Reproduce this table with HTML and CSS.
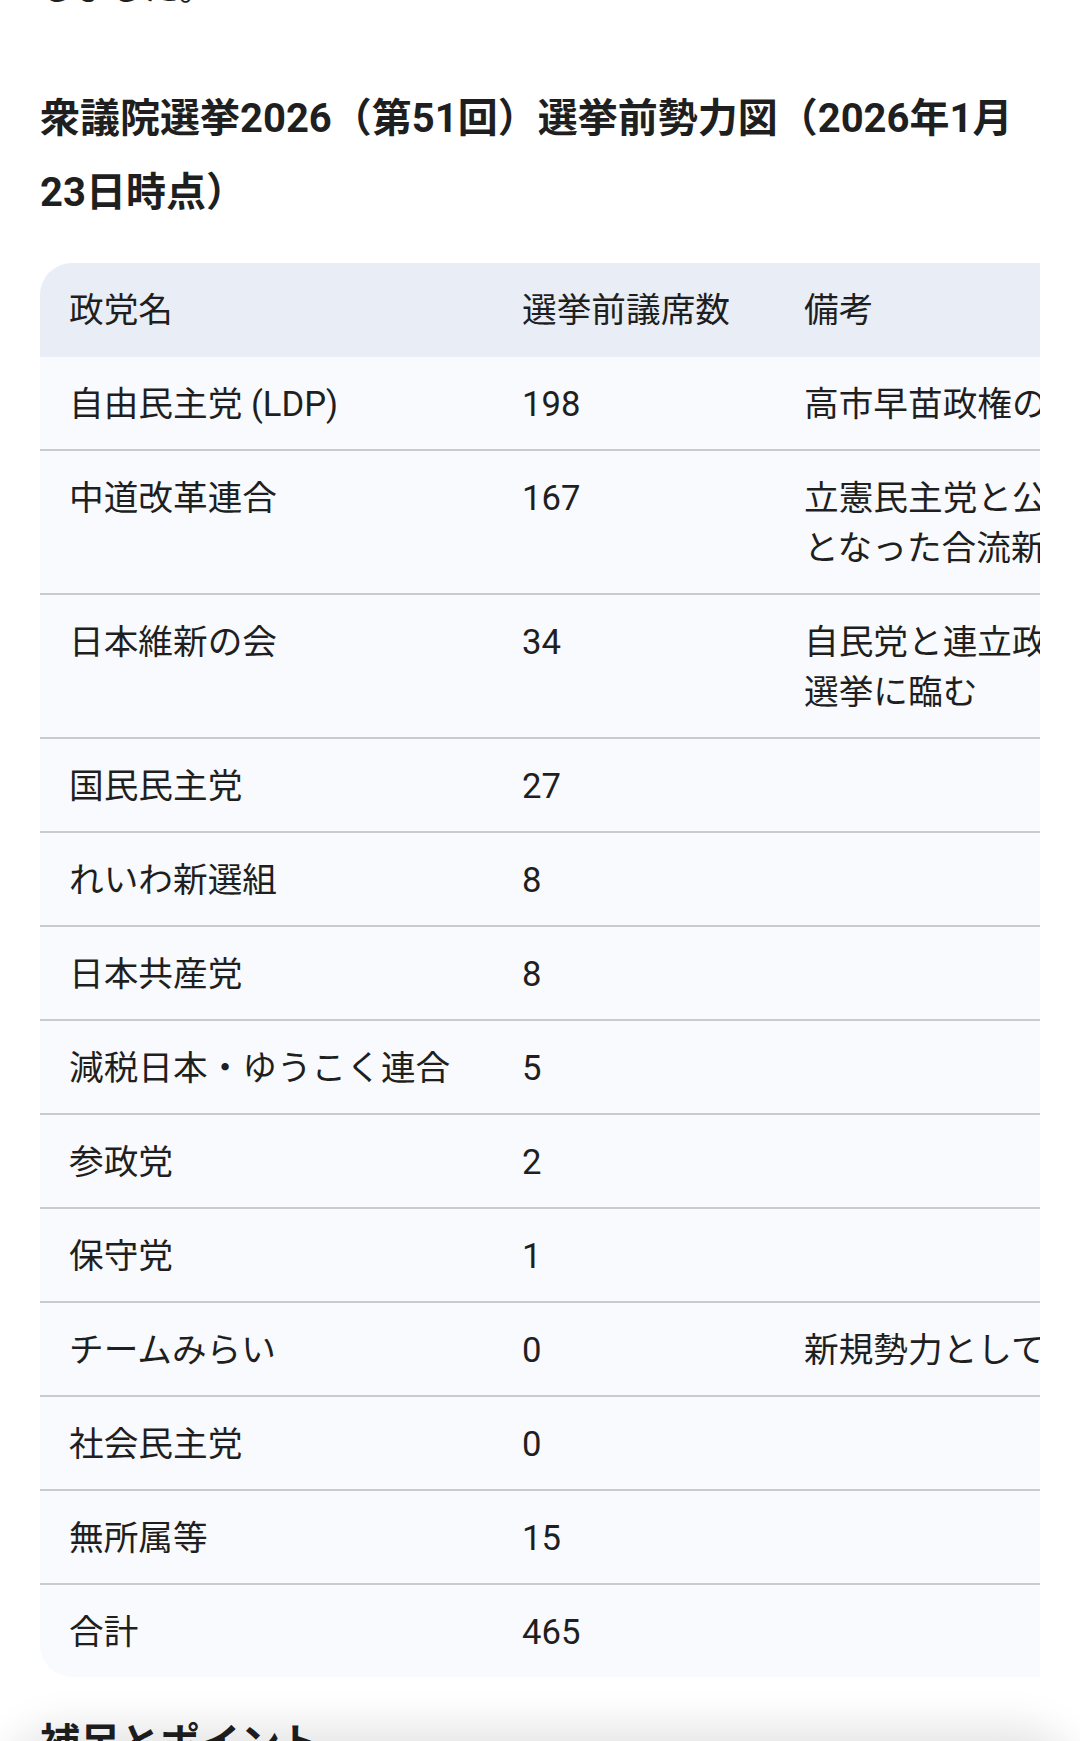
FILE: index.html
```html
<!DOCTYPE html>
<html lang="ja">
<head>
<meta charset="utf-8">
<title>衆議院選挙2026 選挙前勢力図</title>
<link rel="stylesheet" href="styles.css">
</head>
<body>
<main class="page">
  <p class="lead">公示前の各党の議席数と主な動向を、以下の表にまとめて整理しました。</p>
  <h2 class="title">衆議院選挙2026（第51回）選挙前勢力図（2026年1月23日時点）</h2>
  <div class="table-wrap">
    <table class="seats">
      <thead>
        <tr>
          <th class="col-party">政党名</th>
          <th class="col-seats">選挙前議席数</th>
          <th class="col-note">備考</th>
        </tr>
      </thead>
      <tbody>
        <tr><td>自由民主党 (LDP)</td><td>198</td><td>高市早苗政権の与党</td></tr>
        <tr><td>中道改革連合</td><td>167</td><td>立憲民主党と公明党が母体となった合流新党</td></tr>
        <tr><td>日本維新の会</td><td>34</td><td>自民党と連立政権を組んで選挙に臨む</td></tr>
        <tr><td>国民民主党</td><td>27</td><td></td></tr>
        <tr><td>れいわ新選組</td><td>8</td><td></td></tr>
        <tr><td>日本共産党</td><td>8</td><td></td></tr>
        <tr><td>減税日本・ゆうこく連合</td><td>5</td><td></td></tr>
        <tr><td>参政党</td><td>2</td><td></td></tr>
        <tr><td>保守党</td><td>1</td><td></td></tr>
        <tr><td>チームみらい</td><td>0</td><td>新規勢力として挑戦</td></tr>
        <tr><td>社会民主党</td><td>0</td><td></td></tr>
        <tr><td>無所属等</td><td>15</td><td></td></tr>
        <tr><td>合計</td><td>465</td><td></td></tr>
      </tbody>
    </table>
  </div>
  <h3 class="subtitle">補足とポイント</h3>
  <p class="body-text">今回の選挙では、与党の過半数維持が最大の焦点となります。</p>
</main>
<div class="composer-shadow" aria-hidden="true"></div>
</body>
</html>
```
FILE: styles.css
```css
* {
  box-sizing: border-box;
}

html,
body {
  margin: 0;
  background: #ffffff;
}

body {
  font-family: Roboto, "Noto Sans CJK JP", sans-serif;
  color: #1f1f1f;
  font-size: 34.67px;
  line-height: 50px;
  overflow: hidden;
}

.page {
  display: flow-root;
  padding: 0 40px;
}

.lead {
  margin: -87px 0 0;
}

.title {
  margin: 69px 0 0;
  font-size: 40px;
  line-height: 74px;
  font-weight: 700;
}

.table-wrap {
  margin-top: 33px;
  overflow: hidden;
}

.seats {
  border-collapse: separate;
  border-spacing: 0;
  table-layout: fixed;
  width: 1209px;
}

.seats th,
.seats td {
  text-align: left;
  vertical-align: top;
  font-weight: 400;
  padding: 22px 29px 20px;
  background: #f8fafd;
}

.seats th {
  background: #e9eef6;
  padding: 22px 29px 22px;
}

.col-party {
  width: 453px;
}

.col-seats {
  width: 282px;
}

.col-note {
  width: 474px;
}

.seats thead th:first-child {
  border-top-left-radius: 32px;
}

.seats tbody tr:not(:last-child) td {
  border-bottom: 2px solid #c9cbce;
}

.seats tbody tr:last-child td:first-child {
  border-bottom-left-radius: 32px;
}

.subtitle {
  margin: 30px 0 0;
  font-size: 40px;
  line-height: 74px;
  font-weight: 700;
}

.body-text {
  margin: 20px 0 0;
}

.composer-shadow {
  position: fixed;
  left: 8px;
  right: 8px;
  bottom: -120px;
  height: 120px;
  border-radius: 60px;
  background: #eeeeee;
  box-shadow: 0 -6px 40px 10px rgba(0, 0, 0, 0.10);
  pointer-events: none;
}
```
